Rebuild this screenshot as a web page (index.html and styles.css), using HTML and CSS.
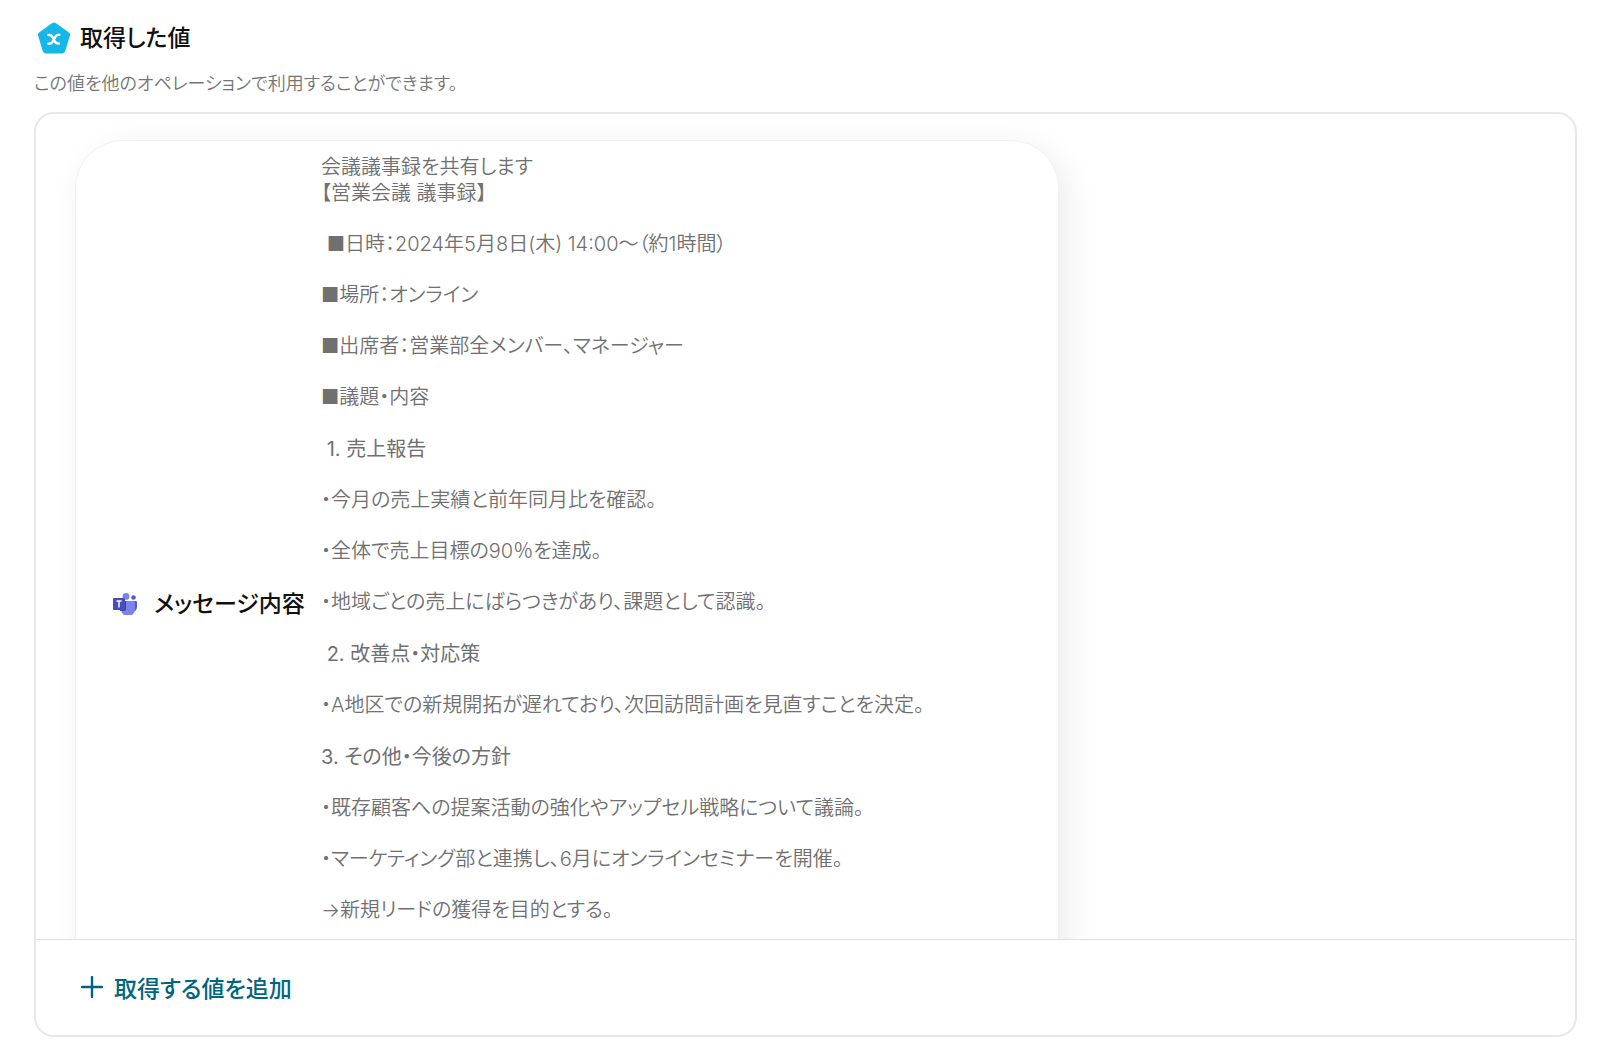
FILE: index.html
```html
<!DOCTYPE html>
<html lang="ja">
<head>
<meta charset="utf-8">
<meta name="viewport" content="width=device-width, initial-scale=1">
<title>取得した値</title>
<link rel="stylesheet" href="styles.css">
</head>
<body>
<main class="page">
  <header class="heading">
    <svg class="heading-icon" viewBox="0 0 32 32" aria-hidden="true">
      <path d="M13.9 1.2Q16 -.3 18.1 1.2L30.6 10.2Q32.6 11.7 31.8 14L27.3 29.1Q26.5 31.4 24.2 31.4H7.8Q5.500 31.400 4.700 29.100L.2 14Q-.6 11.700 1.400 10.200Z" fill="#14b8e8"/>
      <path d="M10.500 12.900H11.500Q13.200 12.900 14.200 14.600L17.200 20Q18.200 21.700 20.900 21.500M21.300 12.800Q18.700 12.600 17.500 14.700L14.600 19.900Q13.400 22 10.500 21.700" fill="none" stroke="#fff" stroke-width="2.500" stroke-linecap="round"/>
    </svg>
    <h1 class="title">取得した値</h1>
  </header>
  <p class="description">この値を他のオペレーションで利用することができます。</p>
  <section class="panel">
    <div class="values">
      <article class="value-card">
        <svg class="teams-icon" viewBox="0 0 24 22" aria-hidden="true">
          <circle cx="20.500" cy="4.500" r="2.300" fill="#5059c9"/>
          <path d="M15 8h8q1 0 1 1v5a4.500 4.500 0 0 1-9 0z" fill="#5059c9"/>
          <circle cx="13" cy="3.400" r="3.400" fill="#7b83eb"/>
          <path d="M8 8h13q1 0 1 1v6a6.500 6.500 0 0 1-14 2z" fill="#7b83eb"/>
          <path d="M7 8h6v8q0 2-2 2H7z" fill="#3f469e"/>
          <rect y="5" width="12" height="12" rx="1" fill="#464eb8"/>
          <path d="M3.500 8h5M6 8v6.500" stroke="#fff" stroke-width="1.400"/>
        </svg>
        <h2 class="value-name">メッセージ内容</h2>
        <div class="message">
          <div class="group">
            <p>会議議事録を共有します<br>【営業会議 議事録】</p>
            <p> ■日時：2024年5月8日(木) 14:00〜（約1時間）</p>
            <p>■場所：オンライン</p>
            <p>■出席者：営業部全メンバー、マネージャー</p>
            <p>■議題・内容</p>
          </div>
          <div class="group">
            <h3> 1. 売上報告</h3>
            <p>・今月の売上実績と前年同月比を確認。</p>
            <p>・全体で売上目標の90％を達成。</p>
            <p>・地域ごとの売上にばらつきがあり、課題として認識。</p>
          </div>
          <div class="group">
            <h3> 2. 改善点・対応策</h3>
            <p>・A地区での新規開拓が遅れており、次回訪問計画を見直すことを決定。</p>
          </div>
          <div class="group">
            <h3>3. その他・今後の方針</h3>
            <p>・既存顧客への提案活動の強化やアップセル戦略について議論。</p>
            <p>・マーケティング部と連携し、6月にオンラインセミナーを開催。</p>
            <p>→新規リードの獲得を目的とする。</p>
          </div>
        </div>
      </article>
    </div>
    <footer class="panel-footer">
      <button class="add-button" type="button">
        <svg class="plus-icon" viewBox="0 0 22 22" aria-hidden="true"><path d="M11 1v20M1 11h20" stroke="currentColor" stroke-width="2.400" stroke-linecap="round"/></svg>
        取得する値を追加
      </button>
    </footer>
  </section>
</main>
</body>
</html>
```
FILE: styles.css
```css
* { box-sizing: border-box; }
body {
  margin: 0;
  background: #fff;
  color: #111;
  font-family: Inter, "Noto Sans CJK JP", sans-serif;
  font-feature-settings: "palt";
}
h1, h2, h3, p { margin: 0; }
.page {
  display: flex;
  flex-direction: column;
  min-height: 100vh;
  padding: 22px 23px 8px 34px;
}
.heading {
  display: flex;
  align-items: center;
  gap: 10px;
  padding-left: 4px;
}
.heading-icon { width: 32px; height: 32px; }
.title, .value-name {
  font-size: 23px;
  line-height: 32px;
  font-weight: 500;
}
.description {
  margin: 16px 0 15px;
  color: #757575;
  font-size: 18px;
  line-height: 27px;
  font-weight: 350;
}
.panel {
  border: 2px solid #e8e8e8;
  border-radius: 20px;
  overflow: hidden;
}
.values {
  height: calc(100vh - 221px);
  overflow: hidden;
  padding: 26px 39px;
}
.value-card {
  display: flex;
  align-items: center;
  max-width: 984px;
  min-height: 928px;
  padding: 13px 37px;
  border: 1px solid #f0f0f0;
  border-radius: 48px;
  box-shadow: 8px 8px 32px rgba(0, 0, 0, 0.08);
}
.teams-icon { flex: none; width: 24px; height: 22px; }
.value-name {
  flex: none;
  width: 184px;
  padding-left: 17px;
  white-space: nowrap;
}
.message {
  align-self: flex-start;
  display: flex;
  flex-direction: column;
  gap: 26px;
  color: #707070;
  font-size: 20px;
  line-height: 26px;
  font-weight: 350;
  white-space: pre-wrap;
}
.group {
  display: flex;
  flex-direction: column;
  gap: 25px;
}
.group h3 {
  font-size: 20px;
  font-weight: 400;
}
.panel-footer {
  padding: 23px 37px 24px;
  border-top: 1px solid #e0e0e0;
}
.add-button {
  display: flex;
  align-items: center;
  gap: 11px;
  height: 48px;
  padding: 0 8px;
  border: 0;
  background: none;
  color: #006680;
  font-family: inherit;
  font-feature-settings: inherit;
  font-size: 23px;
  font-weight: 500;
  cursor: pointer;
}
.plus-icon { width: 22px; height: 22px; }
```
